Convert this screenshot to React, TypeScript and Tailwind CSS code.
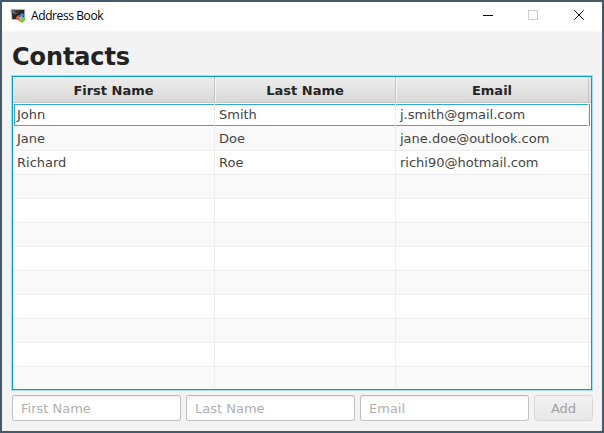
const contacts = [
  ['John', 'Smith', 'j.smith@gmail.com'],
  ['Jane', 'Doe', 'jane.doe@outlook.com'],
  ['Richard', 'Roe', 'richi90@hotmail.com'],
];
const rows = Array.from({ length: 12 }, (_, i) => contacts[i] ?? ['', '', '']);

function AppIcon() {
  return (
    <svg width="16" height="16" viewBox="0 0 16 16">
      <defs>
        <linearGradient id="screen" x1="0" y1="0" x2="1" y2="1">
          <stop offset="0" stopColor="#666" />
          <stop offset="0.5" stopColor="#222" />
          <stop offset="1" stopColor="#3a3a3a" />
        </linearGradient>
      </defs>
      <path d="M1 1.5H14.7V11.5H2Z" fill="url(#screen)" stroke="#b5b5b5" strokeWidth="0.9" />
      <path d="M3 3.2l1.4.9-1.4.9M5 5.5h1.6" stroke="#bbb" strokeWidth="0.6" fill="none" />
      <path d="M5.5 9.5L8.5 7l2.5 2.5-2.5 3Z" fill="#f4552f" />
      <path d="M9 7.5L12 4.7l2.3 2.3-2.6 3Z" fill="#3b86dd" />
      <path d="M9 10.5l2.2-2.2 2 1.7-2.2 2.4Z" fill="#8dc4f4" />
      <path d="M11 11.5l3.3-3.3 1.3 3.3-3 3.5-2-1.3Z" fill="#73d03d" />
      <path d="M8.2 12.2l2-1.2 1.8 1.6-.8 1.7Z" fill="#f57a3a" />
    </svg>
  );
}

function HeaderCell({ label, width }: { label: string; width: string }) {
  return (
    <div className={`${width} flex h-[26px] shrink-0 items-center justify-center border-r border-b border-[#c3c3c3] bg-linear-to-b from-[#ededed] to-[#d9d9d9] pt-0.5 font-bold text-[#252525] shadow-[inset_1px_1px_0_#f5f5f5]`}>
      <span className="leading-4">{label}</span>
    </div>
  );
}

function Row({ cells, index }: { cells: string[]; index: number }) {
  const focused = index === 0;
  const widths = ['w-[202px]', 'w-[181px]', 'w-[193px]'];
  return (
    <div className={`relative flex h-6 shrink-0 ${index % 2 ? 'bg-[#f9f9f9]' : 'bg-white'} ${focused ? '' : 'border-b border-[#ededed]'}`}>
      {focused && <div className="absolute top-px left-px h-[22px] w-[576px] border border-[#2fabcf]" />}
      {cells.map((text, i) => (
        <div key={i} className={`${widths[i]} relative shrink-0 border-r border-[#ededed] pl-1 leading-[23px]`}>
          {text}
        </div>
      ))}
    </div>
  );
}

function Field({ label }: { label: string }) {
  return (
    <input
      aria-label={label}
      placeholder={label}
      className="h-[26px] w-[169px] rounded-[3px] border border-[#c3c3c3] border-t-[#b8b8b8] bg-white bg-linear-to-b from-[#f3f3f3] to-white to-20% px-2 pt-px placeholder:text-[#b0b0b0]"
    />
  );
}

export default function App() {
  return (
    <div className="flex h-[433px] w-[604px] flex-col border-2 border-[#445a6b] bg-[#f3f3f3] font-['DejaVu_Sans',sans-serif] text-[13px] text-[#444]">
      <header className="flex h-[29px] shrink-0 items-start bg-white">
        <div className="mt-[6px] ml-2"><AppIcon /></div>
        <div className="mt-[6px] ml-[5px] font-['Open_Sans',sans-serif] text-[12px] leading-4 tracking-[-0.4px] text-black">Address Book</div>
        <svg className="mt-[7px] mr-[16px] ml-auto" width="103" height="12" shapeRendering="crispEdges" fill="none">
          <path d="M0 6.5h10" stroke="#000" />
          <path d="M45.5 1.5h9v9h-9z" stroke="#ccc" />
          <path d="M91.3 1.3l9.4 9.4M100.7 1.3l-9.4 9.4" stroke="#000" shapeRendering="auto" />
        </svg>
      </header>
      <main className="flex flex-col px-[10px]">
        <h1 className="mt-[11px] h-[34px] text-[24px] leading-[30px] font-bold tracking-[-0.1px] text-[#222]">Contacts</h1>
        <div className="flex h-[314px] w-[580px] flex-col overflow-hidden border border-[#079dcf] bg-white shadow-[0_0_0_1px_#a6dceb]">
          <div className="flex shrink-0">
            <HeaderCell label="First Name" width="w-[202px]" />
            <HeaderCell label="Last Name" width="w-[181px]" />
            <HeaderCell label="Email" width="w-[193px]" />
            <div className="h-[26px] flex-1 border-b border-[#c3c3c3] bg-linear-to-b from-[#ededed] to-[#d9d9d9]" />
          </div>
          {rows.map((cells, i) => <Row key={i} cells={cells} index={i} />)}
        </div>
        <form className="mt-[5px] flex gap-[5px]">
          <Field label="First Name" />
          <Field label="Last Name" />
          <Field label="Email" />
          <button type="button" disabled className="h-[26px] w-[59px] shrink-0 rounded-[3px] border border-[#d8d8d8] bg-linear-to-b from-[#f1f1f1] to-[#e8e8e8] pt-px text-[#a0a0a0]">Add</button>
        </form>
      </main>
    </div>
  );
}
